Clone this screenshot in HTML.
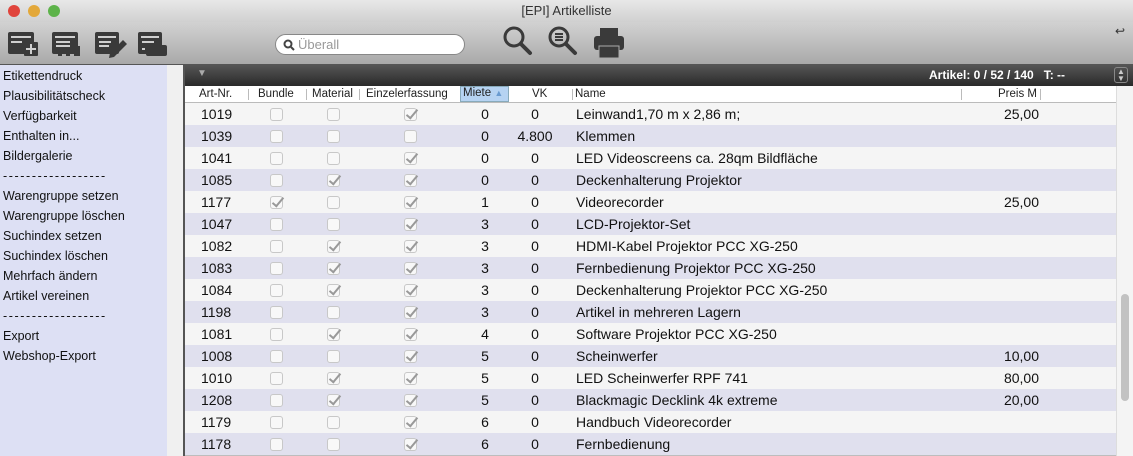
<!DOCTYPE html>
<html><head><meta charset="utf-8"><style>
*{margin:0;padding:0;box-sizing:border-box}
body{width:1133px;height:456px;overflow:hidden;font-family:"Liberation Sans",sans-serif;background:#bdbdbd;position:relative}
.title{position:absolute;left:0;top:0;width:1133px;height:22px;background:linear-gradient(#e8e8e8,#d0d0d0);text-align:center;font-size:13px;line-height:22px;color:#333}
.tl{position:absolute;top:5px;width:12px;height:12px;border-radius:50%}
.tb{position:absolute;left:0;top:22px;width:1133px;height:43px;background:linear-gradient(#d2d2d2,#a9a9a9);border-bottom:1px solid #555}
.search{position:absolute;left:275px;top:34px;width:190px;height:21px;border-radius:11px;background:#fff;border:1px solid #888;font-size:13px;color:#999;line-height:19px;padding-left:22px}
.side{position:absolute;left:0;top:65px;width:167px;height:391px;background:#dde0f4}
.side div{position:absolute;left:3px;font-size:12.5px;color:#111}
.side .d{letter-spacing:1.6px}
.gap{position:absolute;left:167px;top:65px;width:16px;height:391px;background:#f0f0f0}
.vline{position:absolute;left:183px;top:65px;width:2px;height:391px;background:#555}
.bar{position:absolute;left:185px;top:65px;width:948px;height:21px;background:linear-gradient(#555,#2a2a2a)}
.hdr{position:absolute;left:185px;top:86px;width:931px;height:17px;background:#fff;border-bottom:1px solid #bbb;font-size:11.5px;color:#222}
.hdr span{position:absolute;top:2px}
.sep{position:absolute;top:3px;width:1px;height:11px;background:#bbb}
.row{position:absolute;left:185px;width:931px;height:22px;font-size:14px;color:#111}
.row span{position:absolute;top:3px}
.cb{position:absolute;top:5px;width:13px;height:13px;border:1px solid #c8c8c8;border-radius:3px;background:#f8f8f8}
.cb.c::after{content:"";position:absolute;left:4px;top:-2px;width:4px;height:10px;border-right:2px solid #999;border-bottom:2px solid #999;transform:rotate(40deg)}
.sb{position:absolute;left:1116px;top:86px;width:17px;height:370px;background:#f4f4f4;border-left:1px solid #ddd}
</style></head><body>
<div class="title">[EPI] Artikelliste</div>
<div class="tl" style="left:8px;background:#e0443c"></div>
<div class="tl" style="left:28px;background:#e3a83a"></div>
<div class="tl" style="left:48px;background:#5db34a"></div>
<div class="tb">
<svg width="180" height="43" style="position:absolute;left:0;top:0">
<g fill="#3a3a3a">
<rect x="8" y="10" width="26" height="22" rx="2"/><rect x="24" y="20" width="14" height="14" rx="1"/>
<rect x="52" y="10" width="26" height="22" rx="2"/><rect x="58" y="30" width="4" height="4"/><rect x="66" y="30" width="4" height="4"/><rect x="74" y="24" width="6" height="10"/>
<rect x="95" y="10" width="24" height="22" rx="2"/><path d="M110 31l13-13 4 4-13 13-5 1z"/>
<rect x="138" y="10" width="24" height="22" rx="2"/><rect x="146" y="23" width="21" height="11" rx="2"/>
</g>
<g fill="#cfcfcf"><rect x="11" y="14" width="20" height="2"/><rect x="11" y="19" width="11" height="2"/><rect x="55" y="14" width="20" height="2"/><rect x="56" y="19" width="14" height="2"/><rect x="56" y="23" width="14" height="2"/><rect x="98" y="14" width="18" height="2"/><rect x="99" y="19" width="12" height="2"/><rect x="99" y="23" width="10" height="2"/><rect x="141" y="14" width="18" height="2"/><rect x="142" y="19" width="12" height="2"/><rect x="142" y="26" width="3" height="2"/></g>
<path d="M31 22v10M26 27h10" stroke="#cfcfcf" stroke-width="2"/>
</svg>
<svg width="130" height="43" style="position:absolute;left:500px;top:0">
<circle cx="14" cy="15" r="9" fill="none" stroke="#3a3a3a" stroke-width="3"/><path d="M21 22l9 9" stroke="#3a3a3a" stroke-width="4" stroke-linecap="round"/>
<circle cx="59" cy="15" r="9" fill="none" stroke="#3a3a3a" stroke-width="3"/><path d="M66 22l9 9" stroke="#3a3a3a" stroke-width="4" stroke-linecap="round"/>
<path d="M55 12h8M55 15h8M55 18h8" stroke="#3a3a3a" stroke-width="2"/>
<rect x="100" y="6" width="18" height="10" fill="#3a3a3a"/><rect x="94" y="14" width="30" height="14" rx="3" fill="#3a3a3a"/><rect x="99" y="24" width="20" height="12" fill="#3a3a3a" stroke="#aaa"/>
</svg>
<span style="position:absolute;right:8px;top:2px;font-size:12px;color:#333">↩</span>
</div>
<div class="search">Überall<svg width="12" height="12" style="position:absolute;left:7px;top:4px"><circle cx="5" cy="5" r="3.5" fill="none" stroke="#444" stroke-width="2"/><path d="M8 8l3 3" stroke="#444" stroke-width="2"/></svg></div>
<div class="side">
<div style="top:4px">Etikettendruck</div><div style="top:24px">Plausibilitätscheck</div><div style="top:44px">Verfügbarkeit</div><div style="top:64px">Enthalten in...</div><div style="top:84px">Bildergalerie</div><div class="d" style="top:104px">------------------</div><div style="top:124px">Warengruppe setzen</div><div style="top:144px">Warengruppe löschen</div><div style="top:164px">Suchindex setzen</div><div style="top:184px">Suchindex löschen</div><div style="top:204px">Mehrfach ändern</div><div style="top:224px">Artikel vereinen</div><div class="d" style="top:244px">------------------</div><div style="top:264px">Export</div><div style="top:284px">Webshop-Export</div>
</div>
<div class="gap"></div><div class="vline"></div>
<div class="bar"><span style="position:absolute;left:12px;top:3px;color:#aaa;font-size:10px">▼</span><span style="position:absolute;left:744px;top:3px;color:#fff;font-size:12px;font-weight:bold">Artikel: 0 / 52 / 140 &nbsp;&nbsp;T: --</span><span style="position:absolute;left:929px;top:2px;width:14px;height:16px;border:1px solid #888;border-radius:3px;color:#ccc;font-size:8px;text-align:center;line-height:7px">▲<br>▼</span></div>
<div class="hdr">
<span style="left:14px">Art-Nr.</span><div class="sep" style="left:63px"></div>
<span style="left:73px">Bundle</span><div class="sep" style="left:121px"></div>
<span style="left:127px">Material</span><div class="sep" style="left:174px"></div>
<span style="left:181px">Einzelerfassung</span>
<div style="position:absolute;left:275px;top:0;width:49px;height:16px;background:#b6d3f2;border:1px solid #8ab"></div><span style="left:278px;top:1px">Miete <span style="position:static;color:#6a9bd0;font-size:9px">▲</span></span>
<span style="left:347px">VK</span><div class="sep" style="left:387px"></div>
<span style="left:390px">Name</span><div class="sep" style="left:776px"></div>
<span style="left:813px">Preis M</span><div class="sep" style="left:855px"></div>
</div>
<div id="rows"></div>
<div class="sb"><div style="position:absolute;left:4px;top:208px;width:8px;height:107px;border-radius:4px;background:#c2c2c2"></div></div>
<script>
var d=[["1019",0,0,1,"0","0","Leinwand1,70 m x 2,86 m;","25,00"],["1039",0,0,0,"0","4.800","Klemmen",""],["1041",0,0,1,"0","0","LED Videoscreens ca. 28qm Bildfläche",""],["1085",0,1,1,"0","0","Deckenhalterung Projektor",""],["1177",1,0,1,"1","0","Videorecorder","25,00"],["1047",0,0,1,"3","0","LCD-Projektor-Set",""],["1082",0,1,1,"3","0","HDMI-Kabel Projektor PCC XG-250",""],["1083",0,1,1,"3","0","Fernbedienung Projektor PCC XG-250",""],["1084",0,1,1,"3","0","Deckenhalterung Projektor PCC XG-250",""],["1198",0,0,1,"3","0","Artikel in mehreren Lagern",""],["1081",0,1,1,"4","0","Software Projektor PCC XG-250",""],["1008",0,0,1,"5","0","Scheinwerfer","10,00"],["1010",0,1,1,"5","0","LED Scheinwerfer RPF 741","80,00"],["1208",0,1,1,"5","0","Blackmagic Decklink 4k extreme","20,00"],["1179",0,0,1,"6","0","Handbuch Videorecorder",""],["1178",0,0,1,"6","0","Fernbedienung",""]];
var h="";d.forEach(function(r,i){h+='<div class="row" style="top:'+(103+i*22)+'px;background:'+(i%2?'#e0e0ee':'#f5f5f5')+'">'+
'<span style="left:16px">'+r[0]+'</span>'+
'<div class="cb'+(r[1]?' c':'')+'" style="left:85px"></div>'+
'<div class="cb'+(r[2]?' c':'')+'" style="left:142px"></div>'+
'<div class="cb'+(r[3]?' c':'')+'" style="left:219px"></div>'+
'<span style="left:294px;width:12px;text-align:center">'+r[4]+'</span>'+
'<span style="left:310px;width:80px;text-align:center">'+r[5]+'</span>'+
'<span style="left:391px">'+r[6]+'</span>'+
'<span style="right:77px">'+r[7]+'</span></div>';});
document.getElementById("rows").innerHTML=h;
</script>
</body></html>
